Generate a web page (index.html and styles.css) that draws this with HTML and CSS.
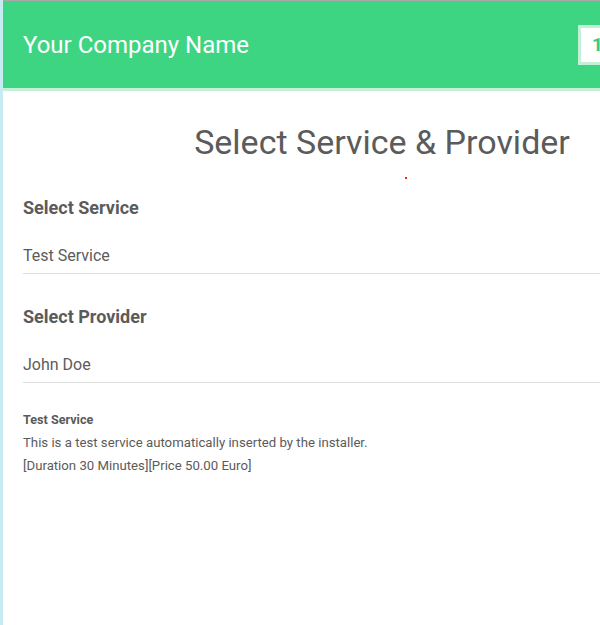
FILE: index.html
```html
<!DOCTYPE html>
<html>
<head>
<meta charset="utf-8">
<title>Select Service &amp; Provider</title>
<link rel="stylesheet" href="styles.css">
</head>
<body>
<div class="page">
  <header class="topbar">
    <div class="brand">Your Company Name</div>
    <div class="step-box"><span class="step-num">1</span></div>
  </header>
  <main class="content">
    <h1 class="title">Select Service &amp; Provider</h1>
    <div class="dot-row"><span class="dot"></span></div>
    <section class="field">
      <h2 class="field-label">Select Service</h2>
      <div class="field-value">Test Service</div>
    </section>
    <section class="field field-second">
      <h2 class="field-label">Select Provider</h2>
      <div class="field-value">John Doe</div>
    </section>
    <section class="details">
      <div class="details-name">Test Service</div>
      <div class="details-line">This is a test service automatically inserted by the installer.</div>
      <div class="details-line">[Duration 30 Minutes][Price 50.00 Euro]</div>
    </section>
  </main>
</div>
</body>
</html>
```

FILE: styles.css
```css
html, body {
  margin: 0;
  padding: 0;
  overflow: hidden;
}
body {
  font-family: Roboto, "Liberation Sans", Arial, sans-serif;
  color: #5b5b5b;
  background: #ffffff;
}
.page {
  box-sizing: border-box;
  min-height: 100vh;
  width: 780px;
  border-left: 3px solid #c6ebf1;
}
.topbar {
  box-sizing: border-box;
  height: 91px;
  border-top: 1px solid #a9a9a9;
  border-bottom: 3px solid #c3f0d6;
  background: #3ed582;
  display: grid;
  grid-template-columns: 555px auto;
  align-items: center;
  padding: 1px 0 0 20px;
}
.brand {
  color: #ffffff;
  font-size: 24px;
  line-height: 28px;
}
.step-box {
  box-sizing: border-box;
  width: 60px;
  height: 40px;
  margin-top: -1px;
  border: 3px solid #c3f0d6;
  background: #ffffff;
  display: flex;
  align-items: center;
  padding-left: 11px;
}
.step-num {
  color: #3ec87a;
  font-weight: 700;
  font-size: 19px;
  line-height: 20px;
}
.content {
  width: 718px;
  padding-left: 20px;
}
.title {
  margin: 31px 0 0;
  font-size: 34px;
  line-height: 40px;
  font-weight: 400;
  text-align: center;
  color: #5b5b5b;
}
.dot-row {
  height: 2px;
  margin-top: 15px;
  padding-left: 382px;
}
.dot {
  display: block;
  width: 2px;
  height: 2px;
  background: #ff2020;
}
.field-label {
  margin: 17px 0 0;
  font-size: 18px;
  line-height: 24px;
  font-weight: 700;
  color: #5b5b5b;
}
.field-value {
  margin-top: 24px;
  font-size: 16px;
  line-height: 24px;
  padding-bottom: 5px;
  border-bottom: 1px solid #dcdcdc;
}
.field-second .field-label {
  margin-top: 31px;
}
.details {
  margin-top: 25px;
  font-size: 13.2px;
  line-height: 23px;
}
.details-name {
  font-weight: 700;
  font-size: 12.6px;
}
```
